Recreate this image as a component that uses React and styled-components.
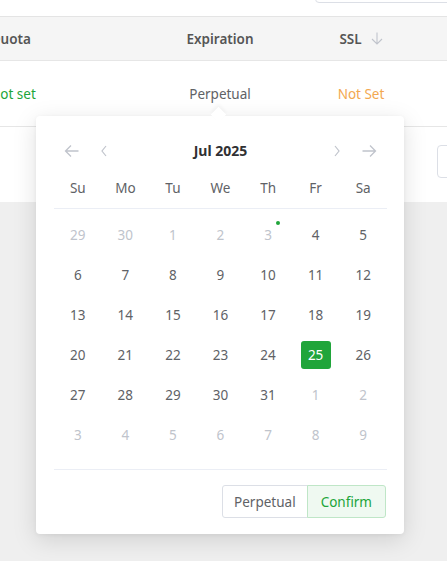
import React from "react";
import styled, { createGlobalStyle } from "styled-components";

const Global = createGlobalStyle`
  html, body {
    margin: 0;
    padding: 0;
    background: #efefef;
    font-family: "Noto Sans", "Open Sans", sans-serif;
    font-size: 13px;
    overflow: hidden;
  }
`;

const Page = styled.div`
  position: relative;
  width: 447px;
  height: 561px;
  overflow: hidden;
  background: #efefef;
`;

const TopBar = styled.div`
  height: 17px;
  background: #fff;
  display: flex;
  justify-content: flex-end;
  border-bottom: 1px solid #e4e4e4;
  box-sizing: border-box;
`;

const Search = styled.div`
  width: 140px;
  height: 30px;
  margin-top: -29px;
  margin-right: -10px;
  border: 1px solid #dcdfe6;
  border-radius: 4px;
  background: #fff;
`;

const Row = styled.div`
  display: grid;
  grid-template-columns: 170px 120px 162px 1fr;
  margin-left: -10px;
  height: ${(p) => p.$h}px;
  align-items: center;
  background: ${(p) => p.$bg || "#fff"};
  border-bottom: 1px solid #e6e6e6;
  box-sizing: border-box;
`;

const Cell = styled.div`
  text-align: ${(p) => (p.$left ? "left" : "center")};
  color: ${(p) => p.$color || "#606266"};
  font-weight: ${(p) => (p.$head ? 600 : 400)};
  font-size: 13.5px;
  white-space: nowrap;
  display: flex;
  align-items: center;
  justify-content: ${(p) => (p.$left ? "flex-start" : "center")};
  gap: 9px;
`;

const Below = styled.div`
  height: 75px;
  background: #fff;
  display: flex;
  justify-content: flex-end;
  padding-top: 18px;
  box-sizing: border-box;
`;

const PageBtn = styled.div`
  width: 40px;
  height: 33px;
  margin-right: -30px;
  border: 1px solid #dcdfe6;
  border-radius: 4px;
  box-sizing: border-box;
`;

const Popup = styled.div`
  position: absolute;
  left: 36px;
  top: 116px;
  width: 368px;
  height: 418px;
  background: #fff;
  border-radius: 4px;
  box-shadow: 0 6px 24px rgba(0, 0, 0, 0.13), 0 1px 4px rgba(0, 0, 0, 0.05);
  padding: 18px 17px 0 18px;
  box-sizing: border-box;

  &::before {
    content: "";
    position: absolute;
    top: -7px;
    left: 177px;
    width: 11px;
    height: 11px;
    background: #fff;
    transform: rotate(45deg);
    box-shadow: -2px -2px 4px rgba(0, 0, 0, 0.04);
  }
`;

const Header = styled.div`
  position: relative;
  height: 33px;
  display: flex;
  align-items: center;
  justify-content: center;
`;

const Title = styled.div`
  font-size: 14px;
  font-weight: 700;
  color: #303133;
`;

const Nav = styled.div`
  position: absolute;
  top: 0;
  bottom: 0;
  ${(p) => (p.$right ? "right" : "left")}: ${(p) => p.$off}px;
  display: flex;
  align-items: center;
`;

const Grid = styled.div`
  display: grid;
  grid-template-columns: repeat(7, 1fr);
`;

const WeekRow = styled(Grid)`
  height: 42px;
  border-bottom: 1px solid #ebeef5;
  margin-bottom: 6px;
  box-sizing: border-box;
  padding-top: 1px;
`;

const Week = styled.div`
  display: flex;
  align-items: center;
  justify-content: center;
  color: #606266;
  font-size: 13.5px;
`;

const Day = styled.div`
  position: relative;
  height: 40px;
  display: flex;
  align-items: center;
  justify-content: center;
`;

const DayNum = styled.span`
  position: relative;
  width: 30px;
  height: 28px;
  display: flex;
  align-items: center;
  justify-content: center;
  border-radius: 3px;
  font-size: 13.5px;
  color: ${(p) => (p.$sel ? "#fff" : p.$dim ? "#c0c4cc" : "#606266")};
  background: ${(p) => (p.$sel ? "#20a53a" : "transparent")};
`;

const Dot = styled.span`
  position: absolute;
  top: 0;
  right: 3px;
  width: 4px;
  height: 4px;
  border-radius: 50%;
  background: #20a53a;
`;

const Footer = styled.div`
  margin-top: 14px;
  border-top: 1px solid #ebeef5;
  padding-top: 15px;
  display: flex;
  justify-content: flex-end;
  padding-right: 1px;
`;

const BtnGroup = styled.div`
  display: flex;
`;

const Btn = styled.button`
  height: 33px;
  padding: 0 ${(p) => p.$px}px;
  font-family: inherit;
  font-size: 13.5px;
  cursor: pointer;
  border: 1px solid ${(p) => (p.$primary ? "#bfe6c7" : "#dcdfe6")};
  background: ${(p) => (p.$primary ? "#eff9f1" : "#fff")};
  color: ${(p) => (p.$primary ? "#20a53a" : "#606266")};
  border-radius: ${(p) => (p.$primary ? "0 3px 3px 0" : "3px 0 0 3px")};
  ${(p) => p.$primary && "margin-left: -1px;"}
`;

const Arrow = ({ dir }) => (
  <svg width="16" height="14" viewBox="0 0 16 14" fill="none" stroke="#c0c4cc" strokeWidth="1.3">
    {dir === "left" ? (
      <path d="M14.5 7H1.5M7 1.5L1.5 7L7 12.5" />
    ) : (
      <path d="M1.5 7H14.5M9 1.5L14.5 7L9 12.5" />
    )}
  </svg>
);

const Chevron = ({ dir }) => (
  <svg width="8" height="12" viewBox="0 0 8 12" fill="none" stroke="#c0c4cc" strokeWidth="1.2">
    {dir === "left" ? <path d="M6 1L2 6L6 11" /> : <path d="M2 1L6 6L2 11" />}
  </svg>
);

const SortDown = () => (
  <svg width="12" height="13" viewBox="0 0 12 13" fill="none" stroke="#c0c4cc" strokeWidth="1.1">
    <path d="M6 0.5V12M1 7L6 12L11 7" />
  </svg>
);

const weekdays = ["Su", "Mo", "Tu", "We", "Th", "Fr", "Sa"];

const buildDays = () => {
  const out = [29, 30].map((d) => ({ d, dim: true }));
  for (let d = 1; d <= 31; d++) out.push({ d });
  let n = 1;
  while (out.length < 42) out.push({ d: n++, dim: true });
  out[2].dim = true;
  out[3].dim = true;
  out[4].dim = true;
  return out;
};

export default function App() {
  const days = buildDays();
  return (
    <Page>
      <Global />
      <TopBar>
        <Search />
      </TopBar>
      <Row $h={44} $bg="#f5f5f5">
        <Cell $left $head $color="#555">Quota</Cell>
        <Cell $head $color="#555">Expiration</Cell>
        <Cell $head $color="#555">
          SSL <SortDown />
        </Cell>
        <Cell />
      </Row>
      <Row $h={66}>
        <Cell $left $color="#20a53a">Not set</Cell>
        <Cell>Perpetual</Cell>
        <Cell $color="#f3a850">Not Set</Cell>
        <Cell />
      </Row>
      <Below>
        <PageBtn />
      </Below>

      <Popup>
        <Header>
          <Nav $off={10}>
            <Arrow dir="left" />
          </Nav>
          <Nav $off={46}>
            <Chevron dir="left" />
          </Nav>
          <Title>Jul 2025</Title>
          <Nav $right $off={46}>
            <Chevron dir="right" />
          </Nav>
          <Nav $right $off={10}>
            <Arrow dir="right" />
          </Nav>
        </Header>
        <WeekRow>
          {weekdays.map((w) => (
            <Week key={w}>{w}</Week>
          ))}
        </WeekRow>
        <Grid>
          {days.map((x, i) => (
            <Day key={i}>
              <DayNum $dim={x.dim} $sel={i === 26}>
                {x.d}
                {i === 4 && <Dot />}
              </DayNum>
            </Day>
          ))}
        </Grid>
        <Footer>
          <BtnGroup>
            <Btn $px={11}>Perpetual</Btn>
            <Btn $primary $px={13}>Confirm</Btn>
          </BtnGroup>
        </Footer>
      </Popup>
    </Page>
  );
}
